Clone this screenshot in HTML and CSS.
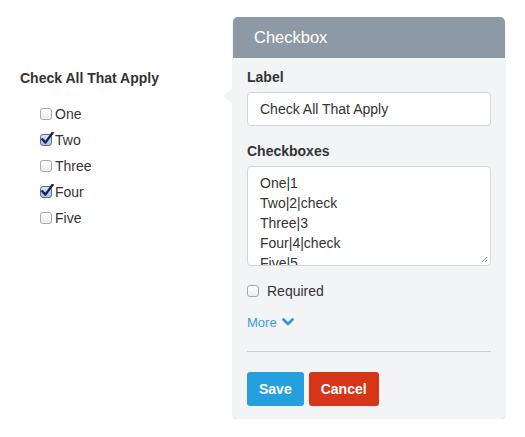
FILE: index.html
```html
<!DOCTYPE html>
<html>
<head>
<meta charset="utf-8">
<link rel="stylesheet" href="styles.css">
</head>
<body>
<div class="page">
  <div class="preview">
    <div class="preview-title">Check All That Apply</div>
    <div class="options">
      <label class="opt"><span class="box"></span>One</label>
      <label class="opt"><span class="box checked"><svg class="tick" viewBox="0 0 14 14" width="14" height="14"><path d="M2.3 7.2 L5.4 10.6 L12.6 0.8" fill="none" stroke="#1b2646" stroke-width="2.4" stroke-linecap="round" stroke-linejoin="round"/></svg></span>Two</label>
      <label class="opt"><span class="box"></span>Three</label>
      <label class="opt"><span class="box checked"><svg class="tick" viewBox="0 0 14 14" width="14" height="14"><path d="M2.3 7.2 L5.4 10.6 L12.6 0.8" fill="none" stroke="#1b2646" stroke-width="2.4" stroke-linecap="round" stroke-linejoin="round"/></svg></span>Four</label>
      <label class="opt"><span class="box"></span>Five</label>
    </div>
  </div>
  <div class="panel">
    <span class="arrow"></span>
    <div class="panel-head">Checkbox</div>
    <div class="panel-body">
      <div class="field-label">Label</div>
      <div class="input">Check All That Apply</div>
      <div class="field-label second">Checkboxes</div>
      <div class="textarea">
        <div class="lines">One|1<br>Two|2|check<br>Three|3<br>Four|4|check<br>Five|5</div>
        <svg class="grip" viewBox="0 0 8 8" width="8" height="8"><path d="M7 2 L2 7 M7 5 L5 7" stroke="#888" stroke-width="1"/></svg>
      </div>
      <label class="required"><span class="box"></span>Required</label>
      <div class="more">More <svg class="chev" viewBox="0 0 12 8" width="12" height="8"><path d="M1.5 1.5 L6 6 L10.5 1.5" fill="none" stroke="#2f95dc" stroke-width="2.6" stroke-linecap="round" stroke-linejoin="round"/></svg></div>
      <div class="divider"></div>
      <div class="buttons">
        <button class="btn save">Save</button>
        <button class="btn cancel">Cancel</button>
      </div>
    </div>
  </div>
</div>
</body>
</html>
```
FILE: styles.css
```css
html, body {
  margin: 0;
  padding: 0;
  background: #ffffff;
}
body {
  font-family: "Liberation Sans", Arial, sans-serif;
  color: #333333;
  font-size: 14px;
}
.page {
  display: flex;
  align-items: flex-start;
  padding-top: 17px;
}
.preview {
  width: 213px;
  padding-left: 20px;
}
.preview-title {
  margin-top: 51px;
  font-weight: bold;
  font-size: 14px;
  line-height: 20px;
}
.options {
  margin-top: 13px;
  padding-left: 20px;
  display: flex;
  flex-direction: column;
}
.opt {
  display: flex;
  align-items: center;
  height: 26px;
  font-size: 14px;
}
.box {
  position: relative;
  display: inline-block;
  box-sizing: border-box;
  width: 12px;
  height: 12px;
  margin-right: 3px;
  border: 1px solid #a9a9a9;
  border-radius: 3px;
  background: linear-gradient(#ffffff, #ececec);
  flex: none;
}
.box.checked {
  border-color: #5b6d99;
  background: linear-gradient(#d6e4fa, #a9c2ea);
}
.tick {
  position: absolute;
  left: -1px;
  top: -3px;
}
.panel {
  position: relative;
  width: 272px;
  background: #f3f4f6;
  border-radius: 5px;
  box-shadow: 0 1px 2px rgba(0, 0, 0, 0.18);
}
.arrow {
  position: absolute;
  left: -10px;
  top: 71px;
  width: 0;
  height: 0;
  border-top: 8px solid transparent;
  border-bottom: 8px solid transparent;
  border-right: 10px solid #f3f4f6;
}
.panel-head {
  height: 41px;
  line-height: 41px;
  padding-left: 21px;
  background: #8e99a6;
  color: #ffffff;
  font-size: 16.5px;
  border-radius: 5px 5px 0 0;
}
.panel-body {
  padding: 9px 14px 13px 14px;
}
.field-label {
  font-weight: bold;
  font-size: 14px;
  line-height: 20px;
  margin-bottom: 5px;
}
.field-label.second {
  margin-top: 15px;
}
.input {
  box-sizing: border-box;
  height: 34px;
  line-height: 32px;
  padding: 0 12px;
  background: #ffffff;
  border: 1px solid #d3d6db;
  border-radius: 4px;
  font-size: 14px;
}
.textarea {
  position: relative;
  box-sizing: border-box;
  height: 100px;
  background: #ffffff;
  border: 1px solid #d3d6db;
  border-radius: 4px;
  overflow: hidden;
  padding: 6px 12px 0 12px;
}
.lines {
  font-size: 14px;
  line-height: 20px;
}
.grip {
  position: absolute;
  right: 2px;
  bottom: 2px;
}
.required {
  display: flex;
  align-items: center;
  margin-top: 15px;
  height: 20px;
  font-size: 14px;
}
.required .box {
  margin-right: 8px;
}
.more {
  display: flex;
  align-items: center;
  gap: 5px;
  margin-top: 11px;
  height: 20px;
  color: #3a9ae0;
  font-size: 13px;
}
.divider {
  margin-top: 19px;
  height: 1px;
  background: #c9cdd2;
}
.buttons {
  display: flex;
  gap: 5px;
  margin-top: 20px;
}
.btn {
  height: 34px;
  padding: 0 12px;
  border: none;
  border-radius: 3px;
  color: #ffffff;
  font-family: "Liberation Sans", Arial, sans-serif;
  font-weight: bold;
  font-size: 14px;
}
.btn.save {
  background: #259fde;
}
.btn.cancel {
  background: #d63518;
}
```
